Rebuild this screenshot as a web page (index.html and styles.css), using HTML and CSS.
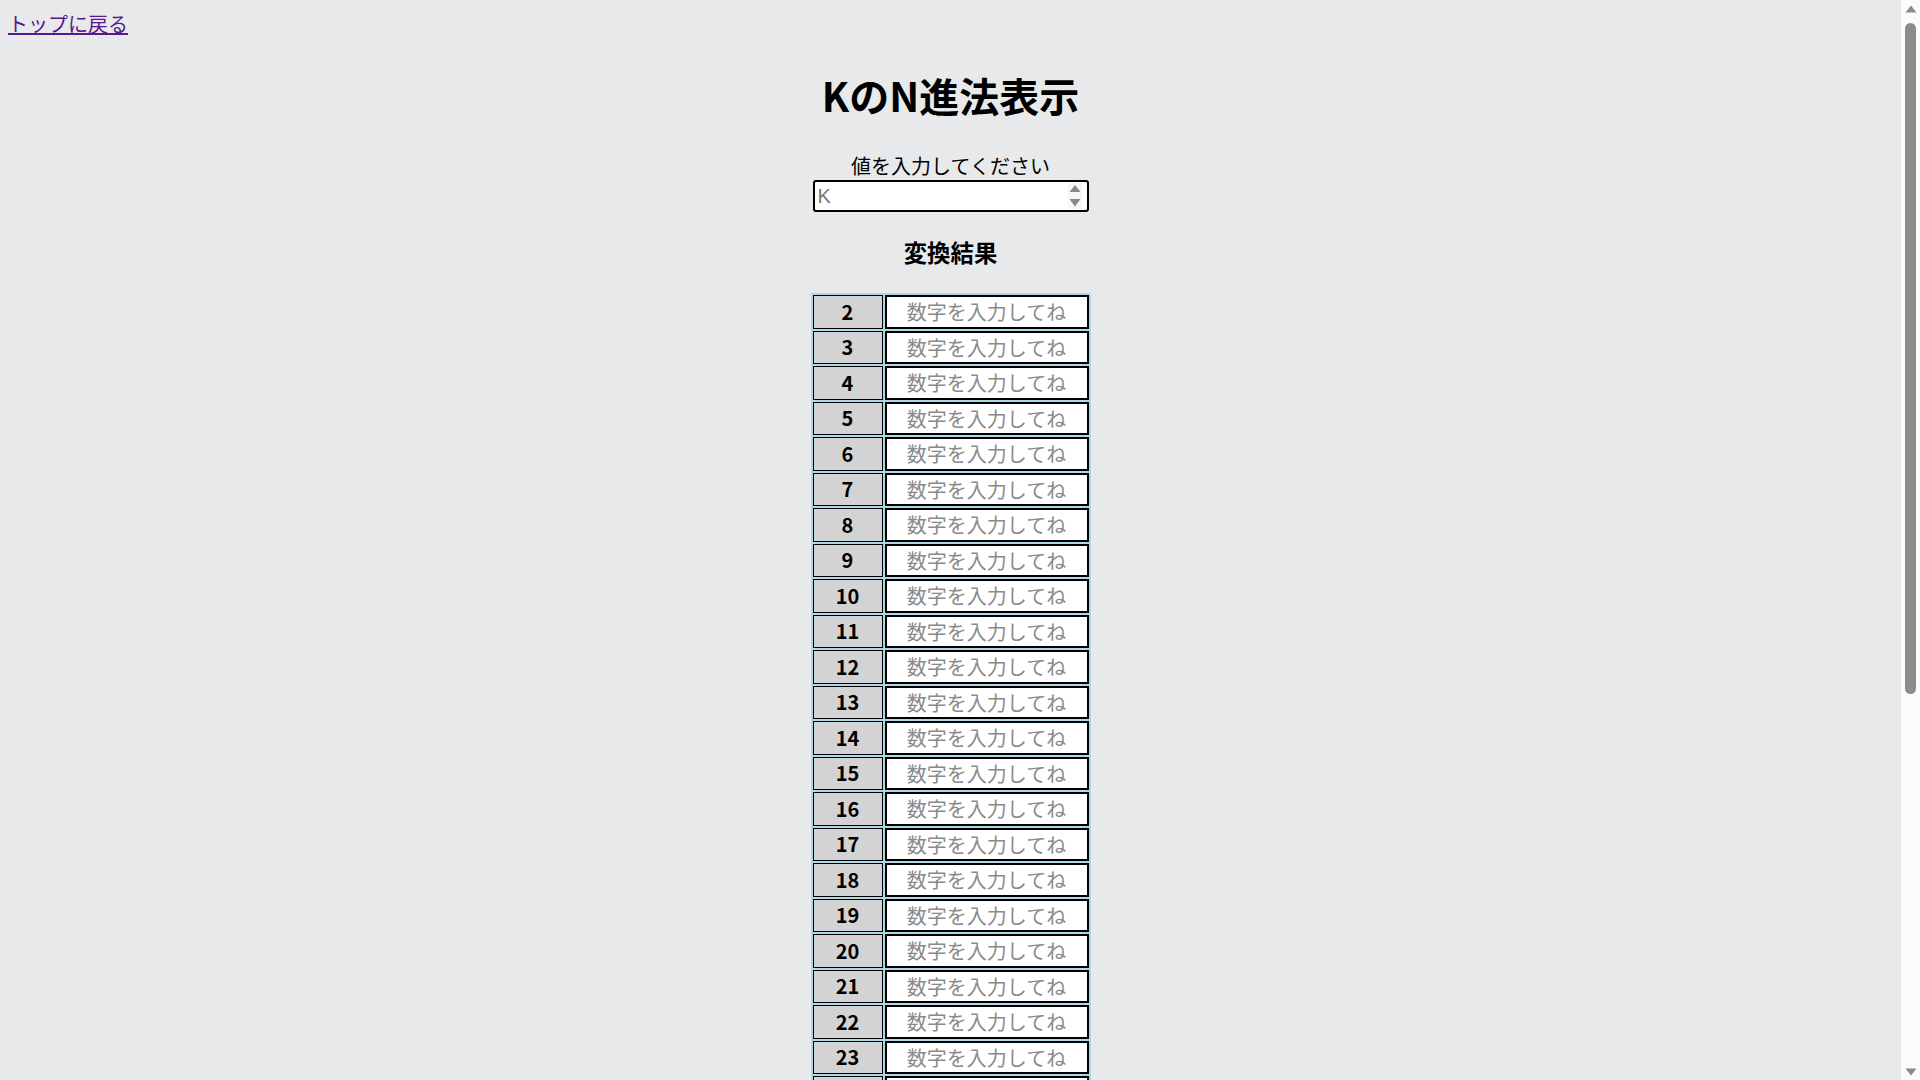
FILE: index.html
```html
<!DOCTYPE html>
<html lang="ja">
<head>
<meta charset="utf-8">
<title>KのN進法表示</title>
<link rel="stylesheet" href="styles.css">
</head>
<body class="window">
<div class="page">
  <a class="back-link" href="#">トップに戻る</a>
  <main class="converter">
    <h1 class="title">KのN進法表示</h1>
    <div class="value-field">
      <label class="value-label" for="k">値を入力してください</label>
      <span class="value-box">
        <input class="value-input" id="k" type="number" placeholder="K">
        <span class="spinner" aria-hidden="true">
          <svg width="14" height="26" viewBox="0 0 14 26">
            <polygon points="7,2 12.5,9 1.5,9" fill="#8a8a8a"/>
            <polygon points="1.5,16 12.5,16 7,23.5" fill="#8a8a8a"/>
          </svg>
        </span>
      </span>
    </div>
    <h3 class="result-title">変換結果</h3>
    <table class="result-table">
      <tbody>
        <tr><th>2</th><td><input class="digit-input" type="text" placeholder="数字を入力してね"></td></tr>
        <tr><th>3</th><td><input class="digit-input" type="text" placeholder="数字を入力してね"></td></tr>
        <tr><th>4</th><td><input class="digit-input" type="text" placeholder="数字を入力してね"></td></tr>
        <tr><th>5</th><td><input class="digit-input" type="text" placeholder="数字を入力してね"></td></tr>
        <tr><th>6</th><td><input class="digit-input" type="text" placeholder="数字を入力してね"></td></tr>
        <tr><th>7</th><td><input class="digit-input" type="text" placeholder="数字を入力してね"></td></tr>
        <tr><th>8</th><td><input class="digit-input" type="text" placeholder="数字を入力してね"></td></tr>
        <tr><th>9</th><td><input class="digit-input" type="text" placeholder="数字を入力してね"></td></tr>
        <tr><th>10</th><td><input class="digit-input" type="text" placeholder="数字を入力してね"></td></tr>
        <tr><th>11</th><td><input class="digit-input" type="text" placeholder="数字を入力してね"></td></tr>
        <tr><th>12</th><td><input class="digit-input" type="text" placeholder="数字を入力してね"></td></tr>
        <tr><th>13</th><td><input class="digit-input" type="text" placeholder="数字を入力してね"></td></tr>
        <tr><th>14</th><td><input class="digit-input" type="text" placeholder="数字を入力してね"></td></tr>
        <tr><th>15</th><td><input class="digit-input" type="text" placeholder="数字を入力してね"></td></tr>
        <tr><th>16</th><td><input class="digit-input" type="text" placeholder="数字を入力してね"></td></tr>
        <tr><th>17</th><td><input class="digit-input" type="text" placeholder="数字を入力してね"></td></tr>
        <tr><th>18</th><td><input class="digit-input" type="text" placeholder="数字を入力してね"></td></tr>
        <tr><th>19</th><td><input class="digit-input" type="text" placeholder="数字を入力してね"></td></tr>
        <tr><th>20</th><td><input class="digit-input" type="text" placeholder="数字を入力してね"></td></tr>
        <tr><th>21</th><td><input class="digit-input" type="text" placeholder="数字を入力してね"></td></tr>
        <tr><th>22</th><td><input class="digit-input" type="text" placeholder="数字を入力してね"></td></tr>
        <tr><th>23</th><td><input class="digit-input" type="text" placeholder="数字を入力してね"></td></tr>
        <tr><th>24</th><td><input class="digit-input" type="text" placeholder="数字を入力してね"></td></tr>
        <tr><th>25</th><td><input class="digit-input" type="text" placeholder="数字を入力してね"></td></tr>
        <tr><th>26</th><td><input class="digit-input" type="text" placeholder="数字を入力してね"></td></tr>
        <tr><th>27</th><td><input class="digit-input" type="text" placeholder="数字を入力してね"></td></tr>
        <tr><th>28</th><td><input class="digit-input" type="text" placeholder="数字を入力してね"></td></tr>
        <tr><th>29</th><td><input class="digit-input" type="text" placeholder="数字を入力してね"></td></tr>
        <tr><th>30</th><td><input class="digit-input" type="text" placeholder="数字を入力してね"></td></tr>
        <tr><th>31</th><td><input class="digit-input" type="text" placeholder="数字を入力してね"></td></tr>
        <tr><th>32</th><td><input class="digit-input" type="text" placeholder="数字を入力してね"></td></tr>
        <tr><th>33</th><td><input class="digit-input" type="text" placeholder="数字を入力してね"></td></tr>
        <tr><th>34</th><td><input class="digit-input" type="text" placeholder="数字を入力してね"></td></tr>
        <tr><th>35</th><td><input class="digit-input" type="text" placeholder="数字を入力してね"></td></tr>
        <tr><th>36</th><td><input class="digit-input" type="text" placeholder="数字を入力してね"></td></tr>
      </tbody>
    </table>
  </main>
</div>
<div class="scrollbar" aria-hidden="true">
  <div class="scroll-btn">
    <svg width="12" height="8" viewBox="0 0 12 8"><polygon points="6,0.5 11.5,7.5 0.5,7.5" fill="#8a8a8a"/></svg>
  </div>
  <div class="scroll-track"><div class="scroll-thumb"></div></div>
  <div class="scroll-btn">
    <svg width="12" height="8" viewBox="0 0 12 8"><polygon points="0.5,0.5 11.5,0.5 6,7.5" fill="#8a8a8a"/></svg>
  </div>
</div>
</body>
</html>
```
FILE: styles.css
```css
html,
body {
  height: 100%;
}

body.window {
  margin: 0;
  display: flex;
  overflow: hidden;
  background: #e8e9eb;
  font-family: "Noto Sans CJK JP", "Noto Sans", sans-serif;
  font-size: 20px;
  color: #000;
}

/* scrolling document area */
.page {
  flex: 1;
  min-width: 0;
  padding: 9px 8px 8px;
  overflow: hidden;
}

.back-link {
  color: #551a8b;
  text-decoration: underline;
}

.converter {
  text-align: center;
}

.title {
  font-size: 40px;
  font-weight: 700;
  margin: 28px 0 27px;
}

.value-field {
  display: flex;
  flex-direction: column;
  align-items: center;
}

.value-label {
  display: block;
  line-height: 29px;
}

.value-box {
  position: relative;
  display: block;
  width: 276px;
  height: 32px;
}

.value-input {
  box-sizing: border-box;
  display: block;
  width: 100%;
  height: 100%;
  margin: 0;
  padding: 1px 24px 1px 3px;
  border: 2px solid #000;
  border-radius: 3px;
  background: #fff;
  font-family: "Liberation Sans", Arial, sans-serif;
  font-size: 20px;
  color: #000;
  outline: none;
  -moz-appearance: textfield;
}

.value-input::placeholder {
  color: #757575;
}

.value-input::-webkit-inner-spin-button,
.value-input::-webkit-outer-spin-button {
  -webkit-appearance: none;
  margin: 0;
}

/* up/down stepper drawn over the right end of the field */
.spinner {
  position: absolute;
  top: 3px;
  right: 7px;
  width: 14px;
  height: 26px;
  background: #f7f7f7;
  display: flex;
}

.result-title {
  font-size: 23.4px;
  font-weight: 700;
  margin: 23px 0 24px;
}

.result-table {
  margin: 0 auto;
  border-spacing: 2px;
  background: #add8e6;
}

.result-table th {
  box-sizing: border-box;
  width: 70px;
  height: 33.5px;
  padding: 0;
  border: 1px solid #000;
  background: #d3d3d3;
  font-weight: 700;
  font-size: 20px;
  line-height: 1;
}

.result-table td {
  padding: 0;
}

.digit-input {
  display: block;
  box-sizing: border-box;
  width: 204px;
  height: 33.5px;
  margin: 0;
  padding: 0 2px;
  border: 2px solid #000;
  background: #fff;
  font-family: "Noto Sans CJK JP", "Noto Sans", sans-serif;
  font-size: 20px;
  text-align: center;
  outline: none;
}

.digit-input::placeholder {
  color: #8a8a8a;
}

/* vertical scrollbar at the window's right edge */
.scrollbar {
  flex: 0 0 19px;
  display: flex;
  flex-direction: column;
  background: #fbfbfb;
}

.scroll-btn {
  height: 17px;
  display: flex;
  align-items: center;
  justify-content: center;
}

.scroll-track {
  flex: 1;
  padding: 6px 4px 0;
}

.scroll-thumb {
  height: 671px;
  border-radius: 6px;
  background: #8b8b8b;
}
```
